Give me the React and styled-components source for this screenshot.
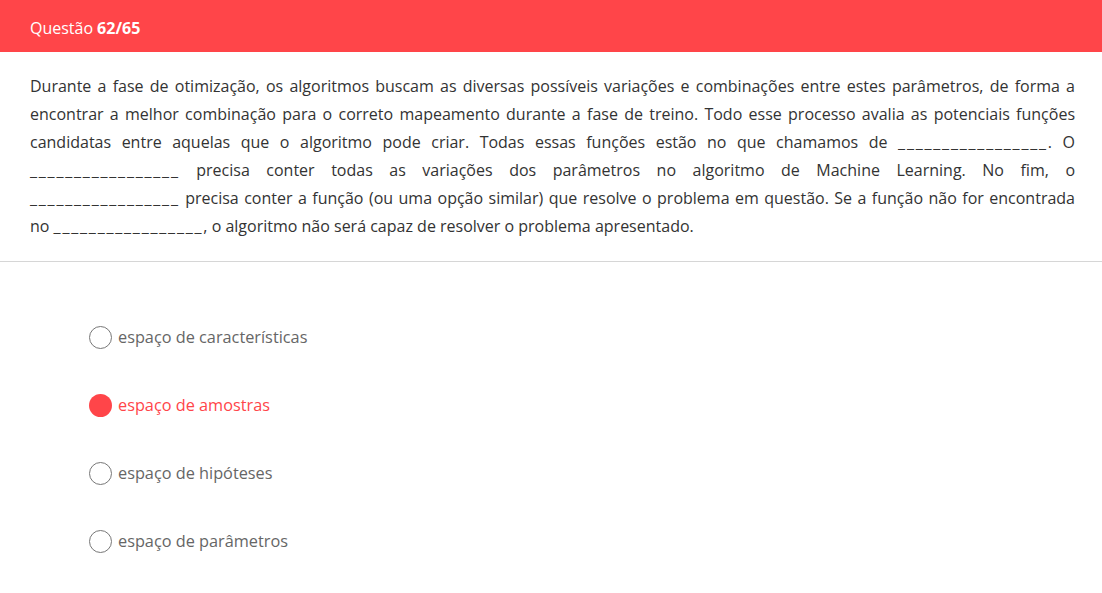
import React, { useState } from 'react';
import styled, { createGlobalStyle } from 'styled-components';

const GlobalStyle = createGlobalStyle`
  body {
    margin: 0;
    background: #fff;
    font-family: "Open Sans", Lato, sans-serif;
  }
`;

const Page = styled.div`
  width: 100%;
  min-height: 593px;
  background: #fff;
`;

const Header = styled.div`
  height: 52px;
  box-sizing: border-box;
  background-color: #ff4549;
  color: #fff;
  display: flex;
  align-items: center;
  padding: 4px 30px 0;
  font-size: 16px;

  strong {
    font-weight: 700;
    margin-left: 4px;
  }
`;

const Statement = styled.p`
  margin: 0;
  padding: 20px 27px 21px 30px;
  font-size: 16px;
  line-height: 28px;
  color: #333;
  text-align: justify;
  border-bottom: 1px solid #d6d6d6;
`;

const Blank = styled.span`
  letter-spacing: 1.8px;
`;

const Options = styled.ul`
  list-style: none;
  margin: 0;
  padding: 62px 0 0 89px;
  display: flex;
  flex-direction: column;
  gap: 42px;
`;

const Option = styled.li`
  display: flex;
  align-items: center;
  gap: 6px;
  height: 26px;
  cursor: pointer;
  font-size: 16.3px;
  color: ${(props) => (props.selected ? '#ff4549' : '#666')};
`;

const Radio = styled.span`
  width: 23px;
  height: 23px;
  box-sizing: border-box;
  border-radius: 50%;
  border: ${(props) => (props.selected ? 'none' : '1px solid #777')};
  background-color: ${(props) => (props.selected ? '#ff4549' : '#fff')};
  flex-shrink: 0;
`;

const Lacuna = () => <Blank>_________________</Blank>;

const alternativas = [
  'espaço de características',
  'espaço de amostras',
  'espaço de hipóteses',
  'espaço de parâmetros',
];

const App = () => {
  const [selected, setSelected] = useState(1);

  return (
    <Page>
      <GlobalStyle />
      <Header>
        Questão <strong>62/65</strong>
      </Header>
      <Statement>
        Durante a fase de otimização, os algoritmos buscam as diversas possíveis variações e combinações entre estes parâmetros, de forma a encontrar a melhor combinação para o correto mapeamento durante a fase de treino. Todo esse processo avalia as potenciais funções candidatas entre aquelas que o algoritmo pode criar. Todas essas funções estão no que chamamos de <Lacuna />. O <Lacuna />{'\u00a0'}precisa conter todas as variações dos parâmetros no algoritmo de Machine Learning. No fim, o <Lacuna />{'\u00a0'}precisa conter a função (ou uma opção similar) que resolve o problema em questão. Se a função não for encontrada no{'\u00a0'}<Lacuna />, o algoritmo não será capaz de resolver o problema apresentado.
      </Statement>
      <Options>
        {alternativas.map((texto, i) => (
          <Option key={texto} selected={selected === i} onClick={() => setSelected(i)}>
            <Radio selected={selected === i} />
            {texto}
          </Option>
        ))}
      </Options>
    </Page>
  );
};

export default App;
